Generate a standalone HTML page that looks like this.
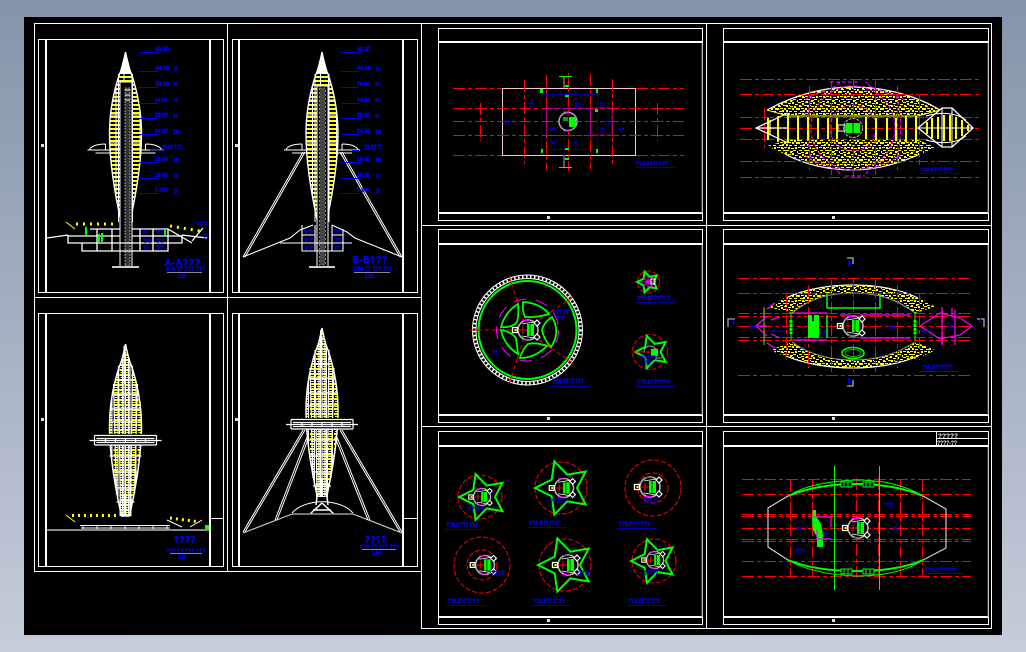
<!DOCTYPE html>
<html><head><meta charset="utf-8"><style>
html,body{margin:0;padding:0;width:1026px;height:652px;overflow:hidden;background:linear-gradient(#8494aa,#c6ccd9)}
svg{position:absolute;left:0;top:0}
text{font-family:"Liberation Sans",sans-serif;font-weight:bold;fill:#00f;stroke:#00f;stroke-width:.3}
.s{font-size:6px}.l{font-size:10px;letter-spacing:1px;stroke-width:.5}
.f{fill:none;stroke:#fff;stroke-width:1;shape-rendering:crispEdges}
.w{fill:none;stroke:#fff}
.rd{fill:none;stroke:#f00;stroke-width:1;stroke-dasharray:12 3 4 3}
.rc{fill:none;stroke:#f00;stroke-width:1;stroke-dasharray:5 2}
.g{fill:none;stroke:#0f0}
.m{fill:none;stroke:#f0f}
.bl{stroke:#00f;stroke-width:1;fill:none;shape-rendering:crispEdges}
</style></head><body>
<svg width="1026" height="652" viewBox="0 0 1026 652" xmlns="http://www.w3.org/2000/svg">
<defs>
<pattern id="sy" width="8" height="4" patternUnits="userSpaceOnUse">
<rect width="8" height="4" fill="#000"/><rect width="8" height="2" fill="#ff0"/><rect x="6" width="1" height="4" fill="#fff"/>
</pattern>
<pattern id="sz" width="6" height="5" patternUnits="userSpaceOnUse">
<rect width="6" height="5" fill="#000"/><rect width="4" height="2" fill="#ff0"/><rect y="3" x="1" width="3" height="1" fill="#ff0"/><rect x="4" width="1" height="5" fill="#fff"/>
</pattern>
<pattern id="st" width="21" height="17" patternUnits="userSpaceOnUse">
<rect width="21" height="17" fill="#000"/>
<path fill="#ff0" d="M0 0h3v1H0zM4 1h2v2H4zM7 0h3v1H7zM11 1h3v1h-3zM15 0h2v2h-2zM18 2h3v1h-3zM1 3h2v2H1zM6 3h3v1H6zM9 3h2v2H9zM13 4h3v1h-3zM17 4h2v2h-2zM0 6h2v2H0zM3 6h3v1H3zM7 6h2v2H7zM11 6h3v1h-3zM15 6h2v2h-2zM19 6h2v2h-2zM2 9h3v1H2zM5 8h2v2H5zM9 8h2v2H9zM12 9h3v1h-3zM17 9h3v1h-3zM0 11h3v1H0zM4 11h2v2H4zM7 11h3v1H7zM11 11h2v2h-2zM14 12h3v1h-3zM18 11h2v2h-2zM1 14h3v1H1zM6 14h3v1H6zM9 14h3v1H9zM13 15h2v2h-2zM16 14h3v1h-3zM20 15h1v2h-1zM3 16h3v1H3zM8 16h2v1H8z"/>
<path fill="#fff" d="M3 4h1v1H3zM12 3h1v1h-1zM19 9h1v1h-1zM6 12h1v1H6zM15 15h1v1h-1z"/>
</pattern>
<path id="lens" d="M0 0C-2 10-4 18-6 22C-12 40-16 60-16 82C-16 110-10 145-4 172L4 172C10 145 16 110 16 82C16 60 12 40 6 22C4 18 2 10 0 0Z"/>
<path id="star" d="M-1 0L-.405-.294-.309-.951.155-.476.809-.588.5 0 .809.588.155.476-.309.951-.405.294Z" fill="none" stroke="#0f0" stroke-width="2" vector-effect="non-scaling-stroke"/>
<g id="cc">
<circle r="10" fill="#000" stroke="#b4b4b4" stroke-width="1.600"/>
<path class="m" d="M-6-9.500h8M-6 9.500h8" stroke-width="1"/>
<path stroke="#f00" fill="none" d="M-17 0H-1M-5-4V4"/>
<rect x="-1" y="-6" width="7" height="12" fill="#0f0"/>
<path stroke="#000" d="M2-6V6" stroke-width=".7"/>
<path fill="none" stroke="#fff" d="M-6-6L6-8M-6 6L6 8" stroke-width=".8"/>
<rect x="-15.500" y="-2.500" width="5" height="5" fill="#000" stroke="#fff" stroke-width="1.300"/>
<rect x="-13.500" y="-1" width="2" height="2" fill="#ff0"/>
<path d="M9-10l3 3-3 3-3-3zM9 4l3 3-3 3-3-3z" fill="#000" stroke="#fff" stroke-width="1.200"/>
</g>
<g id="tE">
<use href="#lens" fill="url(#sz)" stroke="#fff" stroke-width="1.500"/>
<path class="w" stroke-width="1.200" d="M-7 22L-5 172M0 8V172M7 22L5 172M-12 40L-9 150M12 40L9 150M-3 15V172M3 15V172M-13 50H13M-15 65H15M-16 78H16M-16 112H16M-13 128H13M-10 144H10M-8 36H8M-9 158H9"/>
<path class="w" stroke-width="2" d="M-1 2V40M-5 165V172M5 150V172M0 150V172"/>
<rect x="-31" y="90" width="62" height="11" fill="#000"/>
<path class="w" d="M-36 96.500H36M-31 91.500H31M-29 94.500H29M-29 98.500H29M-31 101H31M-31 91.500V101M31 91.500V101M-20 95V99M-10 95V99M0 95V99M10 95V99M20 95V99" stroke-width="1.200"/>
</g>
<g id="tS">
<use href="#lens" fill="url(#sy)" stroke="#fff" stroke-width="1.400"/>
<path class="w" d="M-12 48H12M-15 63H15M-16 91H16M-13 125H13M-7 22V170M7 22V170" stroke-width="1"/>
<path fill="#fff" d="M-3 10L0 0 3 10 6 22H-6Z"/>
<path class="w" stroke-width="1" d="M-38 98H38M-36 98C-35 94-28 92-20 92M36 98C35 94 28 92 20 92M-20 92V98M20 92V98M-30 101H-16M16 101H30"/>
</g>
</defs>

<!-- canvas -->
<rect x="24" y="17" width="978" height="618" fill="#000"/>

<!-- big frames -->
<g class="f">
<path d="M34.500 23.500H991.500V628.500H421.500V571.500H34.500ZM227.500 23.500V571.500M34.500 297.500H421.500M421.500 23.500V571.500M706.500 23.500V628.500M421.500 225.500H991.500M421.500 426.500H991.500"/>
<!-- left sheets -->
<rect x="38.500" y="39.500" width="185" height="253"/><rect x="232.500" y="39.500" width="185" height="253"/>
<rect x="38.500" y="313.500" width="185" height="253"/><rect x="232.500" y="313.500" width="185" height="253"/>
<path stroke-width="2" d="M46 39V293M210 39V293M239 39V293M403 39V293M46 313V567M210 313V567M239 313V567M403 313V567"/>
<path d="M210 518.500H223M403 518.500H417"/>
<!-- right sheets -->
<rect x="438.500" y="28.500" width="264" height="192"/><rect x="723.500" y="28.500" width="265" height="192"/>
<rect x="438.500" y="229.500" width="264" height="193"/><rect x="723.500" y="229.500" width="265" height="193"/>
<rect x="438.500" y="431.500" width="264" height="193"/><rect x="723.500" y="431.500" width="265" height="193"/>
<path stroke-width="2" d="M438 42H703M723 42H989M438 213H703M723 213H989M438 244H703M723 244H989M438 415H703M723 415H989M438 446H703M723 446H989M438 617H703M723 617H989"/>
<path d="M936.500 431V446M936 438.500H989"/>
</g>
<path d="M702 43V213M988 43V213M702 245V415M988 245V415M702 447V617M988 447V617" stroke="#777" fill="none"/>
<path fill="#ddd" d="M547 216h3v3h-3zM832 216h3v3h-3zM547 417h3v3h-3zM832 417h3v3h-3zM547 619h3v3h-3zM832 619h3v3h-3zM41 144h3v3h-3zM235 144h3v3h-3zM41 418h3v3h-3zM235 418h3v3h-3z"/>

<!-- Sheet A -->
<use href="#tS" transform="translate(125.500 52)"/>
<rect x="120" y="82" width="12" height="185" fill="#000" stroke="#fff"/>
<rect x="125" y="88" width="5" height="178" fill="#333" stroke="#bbb" stroke-width=".8" stroke-dasharray="2 1"/>
<path fill="none" stroke="#fff" d="M125 90H130M125 95H130M125 100H130"/>
<path class="w" stroke-width="1.300" d="M47 238L68 235M68 235V243H182V235M182 235L207 238M82 243V251H168V243M90 229H120M132 229H168M68 236H120M132 236H182M97 229V251M112 229V251M140 229V251M153 229V251M168 229V243M168 229L192 243M192 241L203 228"/>
<path stroke="#ccc" stroke-width="2" d="M112 267H139"/>
<path fill="#0f0" d="M85 227h2v8h-2zM98 234h2v8h-2zM101 233h2v9h-2zM164 229h2v6h-2z"/>
<path stroke="#ff0" stroke-width="3" stroke-dasharray="2 5" fill="none" d="M76 224H118M170 226L200 231"/>
<path stroke="#ff0" d="M66 222L75 229" fill="none"/>
<g class="bl"><path d="M139 52.500H158M139 71.500H158M139 87.500H158M139 103.500H158M139 118.500H158M139 134.500H158M139 162.500H158M139 178.500H158M139 193.500H158"/></g>
<path d="M150 150H163" stroke="#66f"/>
<g class="s">
<text x="155" y="51" textLength="14" lengthAdjust="spacingAndGlyphs">48.20</text><text x="155" y="70" textLength="14" lengthAdjust="spacingAndGlyphs">44.00</text><text x="174" y="71" textLength="4" lengthAdjust="spacingAndGlyphs">10</text>
<text x="155" y="86" textLength="14" lengthAdjust="spacingAndGlyphs">39.00</text><text x="173" y="86" textLength="5" lengthAdjust="spacingAndGlyphs">10</text>
<text x="155" y="102" textLength="12" lengthAdjust="spacingAndGlyphs">34.00</text><text x="174" y="102" textLength="4" lengthAdjust="spacingAndGlyphs">10</text>
<text x="155" y="117" textLength="13" lengthAdjust="spacingAndGlyphs">29.00</text><text x="173" y="118" textLength="5" lengthAdjust="spacingAndGlyphs">10</text>
<text x="155" y="133" textLength="13" lengthAdjust="spacingAndGlyphs">24.00</text><text x="173" y="134" textLength="6" lengthAdjust="spacingAndGlyphs">10</text>
<text x="162" y="149" textLength="20" lengthAdjust="spacingAndGlyphs">20.00 ???</text>
<text x="155" y="161" textLength="13" lengthAdjust="spacingAndGlyphs">15.00</text><text x="173" y="162" textLength="6" lengthAdjust="spacingAndGlyphs">10</text>
<text x="155" y="177" textLength="13" lengthAdjust="spacingAndGlyphs">10.00</text><text x="174" y="178" textLength="4" lengthAdjust="spacingAndGlyphs">10</text>
<text x="155" y="192" textLength="13" lengthAdjust="spacingAndGlyphs">5.000</text><text x="174" y="193" textLength="4" lengthAdjust="spacingAndGlyphs">10</text>
<text x="196" y="226" textLength="12" lengthAdjust="spacingAndGlyphs">????</text><text x="203" y="238" textLength="6" lengthAdjust="spacingAndGlyphs">??</text>
<text x="142" y="234" textLength="6" lengthAdjust="spacingAndGlyphs">??</text><text x="156" y="234" textLength="8" lengthAdjust="spacingAndGlyphs">??</text><text x="143" y="243" textLength="9" lengthAdjust="spacingAndGlyphs">??</text><text x="156" y="243" textLength="8" lengthAdjust="spacingAndGlyphs">??</text><text x="143" y="250" textLength="5" lengthAdjust="spacingAndGlyphs">??</text><text x="156" y="250" textLength="8" lengthAdjust="spacingAndGlyphs">??</text>
<text x="166" y="271" textLength="39" lengthAdjust="spacingAndGlyphs">A-A ?? ??? ???</text><text x="178" y="278" textLength="8" lengthAdjust="spacingAndGlyphs">1:50</text>
</g>
<path d="M167 272.500H202" stroke="#888"/>
<text class="l" x="165" y="266" textLength="36" lengthAdjust="spacingAndGlyphs">A-A???</text>

<!-- Sheet B -->
<use href="#tS" transform="translate(322 52)"/>
<rect x="317" y="86" width="11" height="181" fill="#000" stroke="#fff"/>
<rect x="319.500" y="88" width="6" height="177" fill="#444" stroke="#ccc" stroke-width=".6" stroke-dasharray="2 2"/>
<path class="w" stroke-width="1" d="M303 152L243 257M305 152L245 257M342 152L402 257M340 152L400 257"/>
<path class="w" stroke-width="1.100" d="M243 257L290 238 300 230 313 225M332 225L347 232 355 238 402 257M280 243H352M302 243V251H343V229M302 225V251M315 225V251M332 225V251M302 235H315M332 235H343M302 243H315M332 243H343"/>
<path stroke="#ccc" stroke-width="2" d="M309 267H335"/>
<g class="bl"><path d="M341 52.500H359M341 71.500H359M341 87.500H359M341 103.500H359M341 118.500H359M341 134.500H359M352 150.500H359M341 162.500H359M341 178.500H359M341 193.500H359"/></g>
<g class="s">
<text x="357" y="51" textLength="13" lengthAdjust="spacingAndGlyphs">48.20</text><text x="357" y="70" textLength="14" lengthAdjust="spacingAndGlyphs">44.00</text><text x="376" y="71" textLength="3" lengthAdjust="spacingAndGlyphs">10</text>
<text x="357" y="86" textLength="13" lengthAdjust="spacingAndGlyphs">39.00</text><text x="375" y="86" textLength="4" lengthAdjust="spacingAndGlyphs">10</text>
<text x="357" y="102" textLength="13" lengthAdjust="spacingAndGlyphs">34.00</text><text x="375" y="102" textLength="4" lengthAdjust="spacingAndGlyphs">10</text>
<text x="357" y="117" textLength="13" lengthAdjust="spacingAndGlyphs">29.00</text><text x="375" y="118" textLength="4" lengthAdjust="spacingAndGlyphs">10</text>
<text x="357" y="133" textLength="13" lengthAdjust="spacingAndGlyphs">24.00</text><text x="375" y="134" textLength="6" lengthAdjust="spacingAndGlyphs">10</text>
<text x="364" y="149" textLength="18" lengthAdjust="spacingAndGlyphs">20.00??</text>
<text x="357" y="161" textLength="13" lengthAdjust="spacingAndGlyphs">15.00</text><text x="375" y="162" textLength="6" lengthAdjust="spacingAndGlyphs">10</text>
<text x="357" y="177" textLength="13" lengthAdjust="spacingAndGlyphs">10.00</text><text x="376" y="178" textLength="4" lengthAdjust="spacingAndGlyphs">10</text>
<text x="357" y="192" textLength="13" lengthAdjust="spacingAndGlyphs">5.000</text><text x="376" y="193" textLength="4" lengthAdjust="spacingAndGlyphs">10</text>
<text x="304" y="234" textLength="9" lengthAdjust="spacingAndGlyphs">??</text><text x="333" y="234" textLength="8" lengthAdjust="spacingAndGlyphs">??</text><text x="304" y="242" textLength="9" lengthAdjust="spacingAndGlyphs">??</text><text x="334" y="242" textLength="9" lengthAdjust="spacingAndGlyphs">??</text><text x="304" y="250" textLength="9" lengthAdjust="spacingAndGlyphs">??</text><text x="334" y="250" textLength="6" lengthAdjust="spacingAndGlyphs">??</text>
<text x="353" y="271" textLength="39" lengthAdjust="spacingAndGlyphs">1:50 ?? ??? ???</text><text x="365" y="278" textLength="9" lengthAdjust="spacingAndGlyphs">1:50</text>
</g>
<path d="M354 272.500H390" stroke="#888"/>
<text class="l" x="353" y="263" textLength="35" lengthAdjust="spacingAndGlyphs">B-B???</text>

<!-- Sheet C -->
<use href="#tE" transform="translate(125.500 344)"/>
<path stroke="#ddd" stroke-width="1.200" d="M47 530H209" fill="none"/>
<path class="w" d="M80 525.500H170M81 528H170M83 526V529M97 526V529M111 526V529M125 526V529M139 526V529M153 526V529M167 526V529" stroke-width="1"/>
<path stroke="#ff0" stroke-width="3" stroke-dasharray="2 4" fill="none" d="M72 515.500H118"/>
<path stroke="#ff0" stroke-width="3" stroke-dasharray="2 4" fill="none" d="M170 518L200 522"/>
<path stroke="#ff0" d="M66 515L75 522" fill="none"/>
<path class="w" stroke-width="1" d="M167 520L182 527M190 527L202 520"/>
<rect x="205" y="525" width="4" height="4" fill="#0f0"/>
<g class="s"><text x="166" y="553" textLength="39" lengthAdjust="spacingAndGlyphs">??? ?? ??? ???</text><text x="178" y="559" textLength="8" lengthAdjust="spacingAndGlyphs">1:50</text></g>
<path d="M170 553.500H202" stroke="#888"/>
<text class="l" x="174" y="543" textLength="22" lengthAdjust="spacingAndGlyphs">????</text>

<!-- Sheet D -->
<use href="#tE" transform="translate(322 328)"/>
<rect x="308" y="497" width="28" height="17" fill="#000"/>
<path class="w" stroke-width="1.500" d="M317 497L316 505M327 497L328 505M322 503L310 514M322 503L334 514M313 510H331"/>
<path class="w" stroke-width="1" d="M292 513C305 498 340 498 353 513"/>
<path stroke="#999" stroke-width="1.500" d="M292 514H353" fill="none"/>
<path stroke="#ccc" stroke-width="1.200" d="M243 533L292 514M353 514L402 533" fill="none"/>
<path class="w" stroke-width="1" d="M303 430L243 532M305 430L245 532M342 430L402 532M340 430L400 532M307 437L275 520M309 437L277 520M337 437L370 520M335 437L368 520"/>
<g class="s"><text x="360" y="549" textLength="39" lengthAdjust="spacingAndGlyphs">??? ?? ??? ???</text><text x="372" y="555" textLength="9" lengthAdjust="spacingAndGlyphs">1:50</text></g>
<path d="M362 549.500H396" stroke="#888"/>
<text class="l" x="365" y="543" textLength="22" lengthAdjust="spacingAndGlyphs">????</text>

<!-- Sheet 3: floor plan -->
<rect x="502.500" y="88.500" width="133" height="67" fill="none" stroke="#f0c8c8"/>
<g class="rd"><path d="M453 88.500H502M636 88.500H684M453 108.500H684M453 121.500H684M453 135.500H684M453 155.500H502M636 155.500H684M480.500 103V141M524.500 80V164M546.500 75V170M568.500 73V171M590.500 74V169M612.500 79V164M657.500 103V141"/></g>
<rect x="541.500" y="94.500" width="56" height="55" fill="none" stroke="#00a"/>
<rect x="546.500" y="108.500" width="44" height="27" fill="none" stroke="#a0a" stroke-dasharray="6 2"/>
<path stroke="#808" d="M590 108H612V135H590" fill="none"/>
<path stroke="#555" stroke-width="2" d="M564 76V88M564 155V167"/>
<path class="g" stroke-width="1" d="M559 76.500H572M559 167.500H572"/>
<circle cx="568" cy="121.500" r="9" fill="#000" stroke="#aaa" stroke-width="1.500"/>
<rect x="569" y="117" width="7" height="10" fill="#0f0"/><rect x="563" y="117" width="5" height="4" fill="#0a0"/>
<path class="m" stroke-width="1" d="M563 112H569M563 131H569"/>
<path fill="#0f0" d="M540 89h3v4h-3zM596 89h2v4h-2zM541 149h2v4h-2zM596 149h2v4h-2zM595 109h3v3h-3zM565 85h4v2h-4zM565 95h4v2h-4zM565 148h4v2h-4zM565 158h4v2h-4z"/>
<g class="s"><text x="528" y="107" textLength="6" lengthAdjust="spacingAndGlyphs">??</text><text x="575" y="107" textLength="6" lengthAdjust="spacingAndGlyphs">??</text><text x="599" y="107" textLength="6" lengthAdjust="spacingAndGlyphs">??</text><text x="504" y="125" textLength="6" lengthAdjust="spacingAndGlyphs">??</text><text x="604" y="125" textLength="6" lengthAdjust="spacingAndGlyphs">??</text><text x="550" y="132" textLength="6" lengthAdjust="spacingAndGlyphs">??</text><text x="600" y="132" textLength="5" lengthAdjust="spacingAndGlyphs">??</text><text x="618" y="132" textLength="6" lengthAdjust="spacingAndGlyphs">??</text><text x="550" y="146" textLength="6" lengthAdjust="spacingAndGlyphs">??</text><text x="574" y="146" textLength="4" lengthAdjust="spacingAndGlyphs">??</text>
<text x="636" y="166" textLength="32" lengthAdjust="spacingAndGlyphs">??4.0??????</text></g>
<path d="M635 167.500H675" stroke="#00a"/>

<!-- Sheet 4: roof plan -->
<path d="M767 110C800 92 830 87 853 87C876 87 910 92 940 110L918 116H788Z" fill="url(#st)"/>
<path d="M767 110C800 92 830 87 853 87C876 87 910 92 940 110" fill="none" stroke="#fff" stroke-width="1.200"/>
<path d="M767 146L788 140H918L935 147C910 162 876 170 853 170C830 170 800 162 767 146Z" fill="url(#st)"/>
<path d="M785 154C805 165 830 170 853 170C876 170 900 163 920 154" fill="none" stroke="#fff" stroke-width="1.200"/>
<path stroke="#ff0" d="M767 110L788 116H918L940 110" fill="none"/>
<g class="rd"><path d="M740 79.500H982M740 94.500H982M740 117.500H982M740 128.500H982M740 139.500H982M740 161.500H982M740 177.500H982M764.500 108V148M809.500 86V170M831.500 81V175M853.500 80V176M875.500 81V175M897.500 86V170M919.500 94V165"/></g>
<path fill="none" stroke="#f0f" stroke-dasharray="4 2" d="M811 128A42 42 0 0 1 895 128A42 42 0 0 1 811 128ZM830 128A23 23 0 0 1 876 128A23 23 0 0 1 830 128ZM805 100C815 92 835 90 840 82M905 100C890 92 870 90 866 82M805 155C815 165 835 165 840 174M900 155C890 165 870 165 866 174M830 82H860M845 176H865M812 95C806 110 806 145 812 160M896 95C902 110 902 145 896 160"/>
<path stroke="#ff0" stroke-width="2" fill="none" d="M768 118V140M778 116V142M788 114V143M798 116V141M808 117V140M818 118V139M828 118V139M837 118V139M866 117V139M876 118V140M887 118V140M896 118V140M906 116V142M916 116V142"/>
<path class="w" stroke-width="1.200" d="M788 113L756 128 788 143M770 120V135M788 128H756"/>
<circle cx="853" cy="128" r="9.500" fill="#000" stroke="#bbb" stroke-dasharray="3 1"/>
<rect x="846" y="123" width="14" height="10" fill="#0f0"/><path stroke="#000" d="M853 123V133"/><rect x="838" y="125" width="7" height="6" fill="none" stroke="#fff"/>
<path d="M918 128L942 108H952L973 128 952 147H942Z" fill="#000" stroke="#fff" stroke-width="1.300"/>
<path fill="none" stroke="#ff0" stroke-width="2" d="M927 122V134M932 118V138M938 117V139M944 115V141M950 115V141M956 117V139M962 120V136M968 125V131"/>
<path fill="none" stroke="#fff" d="M918 128H973M942 108V147M952 108V147M926 116C940 112 955 112 966 120M926 140C940 144 955 144 966 136"/>
<text class="s" x="920" y="172" textLength="33" lengthAdjust="spacingAndGlyphs">??4.5??????</text>
<path d="M919 173.500H959" stroke="#00a"/>

<!-- Sheet 5: circle plan -->
<circle cx="527.500" cy="330" r="55" fill="none" stroke="#fff"/><circle cx="527.500" cy="330" r="51.500" fill="none" stroke="#fff"/>
<circle cx="527.500" cy="330" r="53" fill="none" stroke="#fff" stroke-width="3" stroke-dasharray="1.500 2.500"/>
<circle cx="527.500" cy="330" r="49" fill="none" stroke="#0f0" stroke-width="2"/>
<g class="rd" stroke-dasharray="8 3 2 3"><path d="M470 330H519M509 276L524 322M573 297L536 322M573 363L536 338M509 384L524 338"/></g>
<circle cx="527.500" cy="330" r="31" fill="none" stroke="#f0f" stroke-dasharray="13 9"/>
<g class="g" stroke-width="1.800"><path d="M523 302Q540 303 549 314Q535 318 525 317Q522 310 523 302ZM518 304Q505 312 501 327Q512 328 517 322Q519 315 518 304ZM501 330Q504 345 518 354Q517 345 516 338Q510 331 501 330ZM520 358Q535 358 547 346Q535 342 528 344Q522 350 520 358ZM552 317Q561 332 551 347Q544 340 542 330Q544 322 552 317Z"/></g>
<use href="#cc" transform="translate(528 330)"/>
<g class="s"><text x="553" y="314" textLength="16" lengthAdjust="spacingAndGlyphs">?????</text><text x="556" y="320" textLength="8" lengthAdjust="spacingAndGlyphs">??</text><text x="492" y="355" textLength="6" lengthAdjust="spacingAndGlyphs">??</text><text x="552" y="383" textLength="32" lengthAdjust="spacingAndGlyphs">??4.0??????</text><text x="637" y="300" textLength="33" lengthAdjust="spacingAndGlyphs">??5.0??????</text><text x="637" y="384" textLength="33" lengthAdjust="spacingAndGlyphs">??5.5??????</text></g>
<path d="M550 386.500H590M636 302.500H676M636 386.500H676" stroke="#00a"/>
<circle cx="648.500" cy="282" r="11" class="rc"/>
<use href="#star" transform="translate(648 282) scale(11)"/>
<path class="m" stroke-width="1" d="M641 282H654M648 276V288M643 277L653 287M653 277L643 287"/><rect x="651" y="279" width="4" height="5" fill="none" stroke="#fff"/>
<circle cx="650" cy="352" r="17.500" class="rc"/>
<use href="#star" transform="translate(652 352) scale(17)"/>
<path stroke="#aaa" fill="none" d="M644 352A6 6 0 1 1 656 352"/>
<path d="M656 348V358H662" stroke="#999" fill="none"/><rect x="651" y="349" width="7" height="7" fill="#0f0"/><path stroke="#f00" d="M633 352H650"/>
<text class="s" x="640" y="360" textLength="16" lengthAdjust="spacingAndGlyphs">?????</text><text class="s" x="644" y="365" textLength="7" lengthAdjust="spacingAndGlyphs">??</text>

<!-- Sheet 6: plan -->
<path d="M768 307C790 292 830 285 853 285C876 285 915 292 935 307L915 313C895 298 875 293 853 293C830 293 810 298 792 313Z" fill="url(#st)"/>
<path d="M770 350C795 362 830 368 853 368C876 368 915 362 935 350L915 342C895 355 875 360 853 360C830 360 810 355 792 342Z" fill="url(#st)"/>
<path fill="none" stroke="#fff" stroke-width="1.200" d="M786 298C805 289 830 285 853 285C876 285 900 289 918 298M786 356C805 364 830 368 853 368C876 368 900 364 918 356"/>
<path fill="none" stroke="#999" d="M792 313C810 298 830 293 853 293C876 293 895 298 915 313M792 342C810 355 830 360 853 360C876 360 895 355 915 342"/>
<g class="rd"><path d="M738 278.500H971M738 293.500H971M738 313.500H971M738 316.500H971M738 326.500H971M738 337.500H971M738 340.500H971M738 375.500H971M764.500 308V345M786.500 293V360M808.500 285V368M831.500 280V372M853.500 278V372M875.500 280V372M897.500 285V368M919.500 293V360M942.500 310V345"/></g>
<rect x="808" y="315" width="11" height="23" fill="#0f0"/><path stroke="#000" d="M813 315V321" stroke-width="2"/>
<path class="g" stroke-width="1.500" d="M827 315V338M827 294V308H880V294"/>
<ellipse cx="853" cy="353" rx="11" ry="5.500" class="g" stroke-width="1.600"/><ellipse cx="853" cy="353" rx="8" ry="3.500" class="g" stroke-width=".7"/>
<path class="g" stroke-width="1" d="M791 312V341M915 312V341M764 307V345M942 307V345"/>
<path class="g" stroke-width="3" stroke-dasharray="3 1" d="M791 320V334M915 320V334"/>
<path class="m" stroke-width="1.200" d="M756 326L767 316M756 326L767 336M756 326H767M767 309L775 303M767 343L775 348M771 320L780 317M771 334L780 338M793 313H827M793 340H827M860 315H910M840 315H850M860 338H910M920 326L940 313 960 318 972 326 960 335 940 339ZM942 307V345M955 310V345M952 308V315"/>
<use href="#cc" transform="translate(853 326)"/>
<path d="M728 327V319H735M984 327V319H977M847 258H853V264M847 386H853V380" fill="none" stroke="#aaa" stroke-width="1.300"/>
<path class="bl" d="M772 331H786M920 331H932"/>
<g class="s"><text x="732" y="324" textLength="3" lengthAdjust="spacingAndGlyphs">A</text><text x="979" y="323" textLength="3" lengthAdjust="spacingAndGlyphs">A</text><text x="848" y="266" textLength="3" lengthAdjust="spacingAndGlyphs">B</text><text x="848" y="383" textLength="3" lengthAdjust="spacingAndGlyphs">B</text>
<text x="750" y="330" textLength="7" lengthAdjust="spacingAndGlyphs">??</text><text x="888" y="330" textLength="7" lengthAdjust="spacingAndGlyphs">??</text><text x="946" y="329" textLength="7" lengthAdjust="spacingAndGlyphs">??</text><text x="820" y="335" textLength="6" lengthAdjust="spacingAndGlyphs">??</text><text x="922" y="369" textLength="30" lengthAdjust="spacingAndGlyphs">??0.0??????</text></g>
<path d="M919 371.500H959" stroke="#00f"/>

<!-- Sheet 7: six small plans -->
<g>
<circle cx="480" cy="497" r="22" class="rc"/><use href="#star" transform="translate(483 497) scale(24)"/><use href="#cc" transform="translate(482 497) scale(.85)"/>
<circle cx="561" cy="488" r="26" class="rc"/><use href="#star" transform="translate(563 488) scale(28)"/><use href="#cc" transform="translate(564 488) scale(.95)"/>
<circle cx="653" cy="488" r="28" class="rc"/><circle cx="653" cy="488" r="15" class="rc"/><use href="#cc" transform="translate(650 487)"/>
<circle cx="482" cy="565" r="28" class="rc"/><circle cx="482" cy="565" r="15" class="rc"/><use href="#cc" transform="translate(485 565) scale(.95)"/>
<circle cx="565" cy="565" r="26" class="rc"/><use href="#star" transform="translate(566 565) scale(28)"/><use href="#cc" transform="translate(568 565)"/>
<circle cx="654" cy="561" r="22" class="rc"/><use href="#star" transform="translate(654 561) scale(23)"/><use href="#cc" transform="translate(655 560) scale(.85)"/>
</g>
<g class="s">
<text x="446" y="527" textLength="32" lengthAdjust="spacingAndGlyphs">??6.0??????</text><text x="529" y="525" textLength="32" lengthAdjust="spacingAndGlyphs">??7.0??????</text><text x="619" y="526" textLength="31" lengthAdjust="spacingAndGlyphs">??8.0??????</text>
<text x="447" y="603" textLength="32" lengthAdjust="spacingAndGlyphs">??9.0??????</text><text x="533" y="603" textLength="32" lengthAdjust="spacingAndGlyphs">??0.5??????</text><text x="628" y="603" textLength="32" lengthAdjust="spacingAndGlyphs">??1.5??????</text>
<text x="468" y="511" textLength="16" lengthAdjust="spacingAndGlyphs">?????</text><text x="550" y="503" textLength="16" lengthAdjust="spacingAndGlyphs">?????</text><text x="643" y="503" textLength="16" lengthAdjust="spacingAndGlyphs">?????</text><text x="488" y="575" textLength="16" lengthAdjust="spacingAndGlyphs">?????</text><text x="576" y="575" textLength="14" lengthAdjust="spacingAndGlyphs">?????</text><text x="644" y="575" textLength="14" lengthAdjust="spacingAndGlyphs">?????</text>
</g>
<path d="M444 529.500H484M528 527.500H567M617 528.500H657M446 605.500H486M531 605.500H571M627 605.500H667" stroke="#00a"/>

<!-- Sheet 8 -->
<g class="rd"><path d="M742 479.500H971M742 494.500H971M742 514.500H971M742 516.500H971M742 528.500H971M742 539.500H971M742 541.500H971M742 561.500H971M742 576.500H971M790.500 480V575M812.500 480V575M834.500 478V578M856.500 478V578M878.500 478V578M900.500 480V575M922.500 480V575"/></g>
<path d="M788 496L768 508V547L788 560M923 496L946 509V548L923 560" fill="none" stroke="#ccc" stroke-width="1.200"/>
<path class="g" stroke-width="2" d="M788 496C810 487 835 484 856 484C880 484 905 488 923 496M788 560C810 569 835 571 856 571C880 571 905 568 923 560"/>
<path class="g" stroke-width="1" d="M788 496C805 485 830 481 856 480C882 480 905 485 923 496M788 560C805 570 830 575 856 576C882 576 905 572 923 560M834.500 466V590M879.500 466V590"/>
<g fill="#000" stroke="#0f0" stroke-width="1"><rect x="841" y="482" width="11" height="5"/><rect x="863" y="482" width="11" height="5"/><rect x="841" y="569" width="11" height="5"/><rect x="863" y="569" width="11" height="5"/></g>
<path stroke="#0f0" d="M844 482V487M848 482V487M866 482V487M870 482V487M844 569V574M848 569V574M866 569V574M870 569V574" fill="none"/>
<path d="M813 510L816 510 816 516 821 524 823 534 823 547 817 547 817 537 813 530 812 520Z" fill="#0f0"/>
<path class="m" stroke-width="1.200" d="M814 517H831V527M831 539H817V530"/>
<use href="#cc" transform="translate(858 528)"/>
<g class="s"><text x="884" y="507" textLength="10" lengthAdjust="spacingAndGlyphs">????</text><text x="795" y="531" textLength="7" lengthAdjust="spacingAndGlyphs">??</text><text x="891" y="531" textLength="7" lengthAdjust="spacingAndGlyphs">??</text><text x="795" y="553" textLength="10" lengthAdjust="spacingAndGlyphs">????</text><text x="822" y="537" textLength="6" lengthAdjust="spacingAndGlyphs">??</text><text x="925" y="572" textLength="31" lengthAdjust="spacingAndGlyphs">??6.5??????</text></g>
<path d="M923 573.500H963" stroke="#00f"/>
<text class="s" style="fill:#fff;stroke:none" x="938" y="438" textLength="20" lengthAdjust="spacingAndGlyphs">?????</text>
<text class="s" style="fill:#fff;stroke:none" x="937" y="445" textLength="20" lengthAdjust="spacingAndGlyphs">????-??</text>
</svg>
</body></html>
